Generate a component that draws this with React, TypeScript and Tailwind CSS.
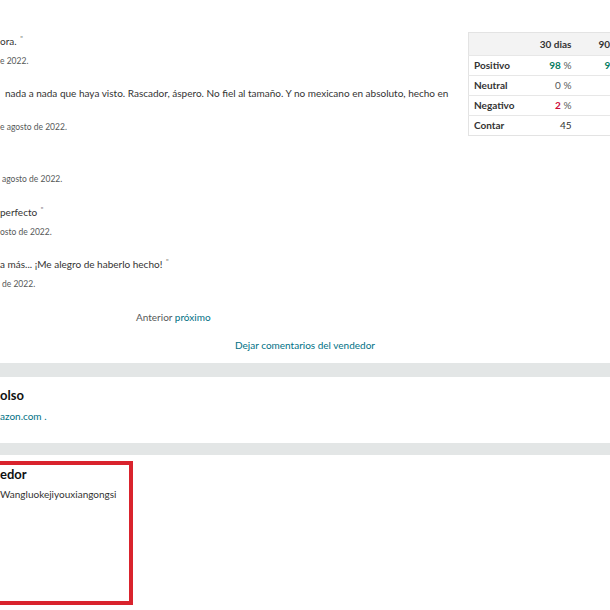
import React from "react";

const font = { fontFamily: "Lato, 'Noto Sans', sans-serif" };

function Text({ mt, children }: { mt: string; children: React.ReactNode }) {
  return (
    <div className={`${mt} h-[18px] leading-[18px] text-[10px] text-[#333] whitespace-nowrap`}>{children}</div>
  );
}

function DateLine({ mt, children }: { mt: string; children: React.ReactNode }) {
  return (
    <div className={`${mt} h-[18px] leading-[18px] text-[8.5px] text-[#565959] whitespace-nowrap`}>{children}</div>
  );
}

const Q = <sup className="text-[7px] text-[#777] ml-[1px]">"</sup>;

export default function App() {
  return (
    <div className="w-[610px] h-[610px] overflow-hidden bg-white relative" style={font}>
      <div className="flex">
        <div className="w-[468px] shrink-0 pt-[32px]">
          <Text mt="mt-0">ora. {Q}</Text>
          <DateLine mt="mt-[2px]">e 2022.</DateLine>
          <Text mt="mt-[14px]">
            <span className="pl-[5px]">nada a nada que haya visto. Rascador, áspero. No fiel al tamaño. Y no mexicano en absoluto, hecho en</span>
          </Text>
          <div className="h-[16px]" />
          <DateLine mt="mt-0">e agosto de 2022.</DateLine>
          <DateLine mt="mt-[34px]">
            <span className="pl-[2px]">agosto de 2022.</span>
          </DateLine>
          <Text mt="mt-[15px]">perfecto {Q}</Text>
          <DateLine mt="mt-[2px]">osto de 2022.</DateLine>
          <Text mt="mt-[14px]">a más... ¡Me alegro de haberlo hecho! {Q}</Text>
          <DateLine mt="mt-[2px]">
            <span className="pl-[2px]">de 2022.</span>
          </DateLine>
        </div>
        <div className="shrink-0 pt-[32px]">
          <table className="border-collapse border border-[#e3e3e3] text-[10px] w-[172px] table-fixed">
            <thead>
              <tr className="bg-[#f3f3f3] h-[23px]">
                <th className="w-[54px]" />
                <th className="w-[56px] text-right pr-[7px] font-bold text-[#333]">30 dias</th>
                <th className="w-[62px] text-left pl-[20px] font-bold text-[#333] whitespace-nowrap">90 dias</th>
              </tr>
            </thead>
            <tbody>
              <tr className="h-[20px] border-t border-[#e7e7e7]">
                <td className="pl-[5px] font-bold text-[#333]">Positivo</td>
                <td className="text-right pr-[7px] text-[#565959]">
                  <span className="text-[#067d62] font-bold">98</span> %
                </td>
                <td className="pl-[26px] whitespace-nowrap text-[#565959]">
                  <span className="text-[#067d62] font-bold">98</span> %
                </td>
              </tr>
              <tr className="h-[20px] border-t border-[#e7e7e7]">
                <td className="pl-[5px] font-bold text-[#333]">Neutral</td>
                <td className="text-right pr-[7px] text-[#565959]">0 %</td>
                <td className="pl-[20px]" />
              </tr>
              <tr className="h-[20px] border-t border-[#e7e7e7]">
                <td className="pl-[5px] font-bold text-[#333]">Negativo</td>
                <td className="text-right pr-[7px] text-[#565959]">
                  <span className="text-[#cc0c39] font-bold">2</span> %
                </td>
                <td className="pl-[20px]" />
              </tr>
              <tr className="h-[20px] border-t border-[#e7e7e7]">
                <td className="pl-[5px] font-bold text-[#333]">Contar</td>
                <td className="text-right pr-[7px] text-[#333]">45</td>
                <td className="pl-[20px]" />
              </tr>
            </tbody>
          </table>
        </div>
      </div>

      <div className="mt-[15px] h-[18px] leading-[18px] pl-[136px] text-[10px] whitespace-nowrap">
        <span className="text-[#565959]">Anterior </span>
        <span className="text-[#007185]">próximo</span>
      </div>
      <div className="mt-[10px] h-[18px] leading-[18px] text-center text-[10px] text-[#007185]">
        Dejar comentarios del vendedor
      </div>

      <div className="mt-[9px] h-[14px] bg-[#e3e6e6]" />
      <div className="h-[66px] pt-[9px]">
        <div className="h-[18px] leading-[18px] text-[13px] font-bold text-[#0f1111]">olso</div>
        <div className="mt-[3px] h-[18px] leading-[18px] text-[10px] text-[#007185]">azon.com .</div>
      </div>
      <div className="h-[12px] bg-[#e3e6e6]" />
      <div className="relative h-[155px]">
        <div className="pt-[10px]">
          <div className="h-[18px] leading-[18px] text-[13px] font-bold text-[#0f1111]">edor</div>
          <div className="mt-[2px] h-[18px] leading-[18px] text-[10px] text-[#333]">Wangluokejiyouxiangongsi</div>
        </div>
        <div className="absolute left-[-10px] top-[6px] w-[143px] h-[144px] border-[4px] border-[#d9232d]" />
      </div>
    </div>
  );
}
